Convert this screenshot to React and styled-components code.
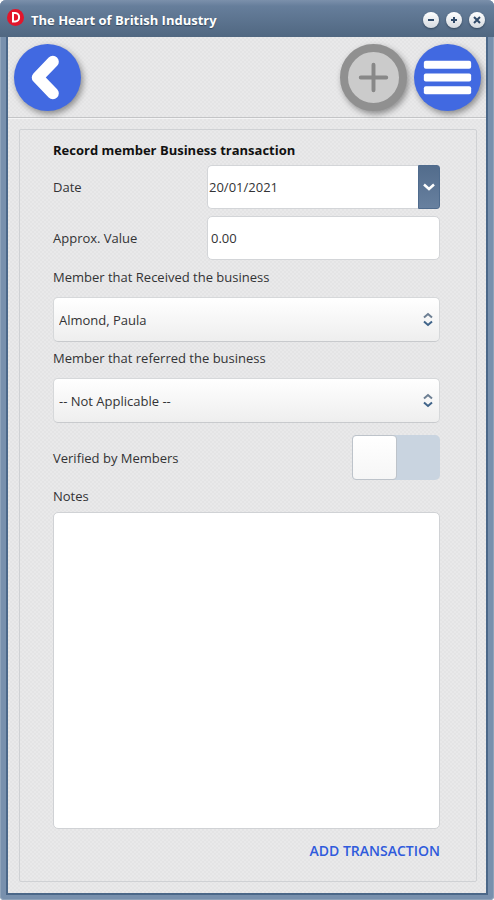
import { useState } from "react";
import styled, { createGlobalStyle } from "styled-components";

const GlobalStyle = createGlobalStyle`
  *, *::before {
    box-sizing: border-box;
  }
  body {
    margin: 0;
    background-color: #fff;
    color: #333335;
    font-family: "Open Sans", "Noto Sans", sans-serif;
    font-size: 13px;
  }
  button, input, select, textarea {
    font: inherit;
    color: inherit;
  }
`;

const Window = styled.div`
  min-height: 100vh;
  display: flex;
  flex-direction: column;
  padding: 0 8px 7px;
  border-radius: 6px 6px 4px 4px;
  background-color: #7890ad;
  box-shadow: inset 0 0 0 1px #8fa3ba;
`;

const TitleBar = styled.header`
  height: 37px;
  margin: 0 -8px;
  padding: 2px 9px 0 7px;
  display: flex;
  align-items: center;
  gap: 7px;
  border-radius: 6px 6px 0 0;
  background: linear-gradient(#7b90ab 0, #667e9b 6px, #506781 100%);
`;

const Logo = styled.svg`
  width: 17px;
  height: 17px;
  flex: none;
  align-self: flex-start;
  margin-top: 7px;
`;

const Title = styled.h1`
  flex: 1;
  margin: 0;
  color: #fff;
  font-size: 13px;
  line-height: 20px;
  font-weight: 700;
  text-shadow: 0 1px 1px #33475d;
`;

const WindowButtons = styled.div`
  display: flex;
  gap: 7px;
`;

const WindowButton = styled.button`
  width: 16px;
  height: 16px;
  padding: 0;
  display: flex;
  align-items: center;
  justify-content: center;
  border: none;
  border-radius: 50%;
  background: linear-gradient(#fff, #d5dae0);
  box-shadow: 0 1px 2px #35485e;
  color: #304a69;

  svg {
    width: 8px;
    height: 8px;
  }
`;

const Body = styled.div`
  flex: 1;
  display: flex;
  flex-direction: column;
  background-color: #e8e8e9;
  background-image: conic-gradient(
    #e4e4e5 25%,
    #e9e9ea 0 50%,
    #e4e4e5 0 75%,
    #e9e9ea 0
  );
  background-size: 4px 4px;
  box-shadow: 0 0 0 2px #4b6788;
  clip-path: inset(0 -2px -2px -2px);
`;

const Toolbar = styled.nav`
  height: 81px;
  padding: 0 5px 0 6px;
  display: flex;
  align-items: center;
  gap: 7px;
  border-bottom: 1px solid #c3c4c6;
  box-shadow: 0 1px 0 #f4f4f5;
`;

const RoundButton = styled.button`
  width: 67px;
  height: 67px;
  padding: 0;
  flex: none;
  border: ${({ $muted }) => ($muted ? "8px solid #909090" : "none")};
  border-radius: 50%;
  background-color: ${({ $muted }) => ($muted ? "#cbcbcb" : "#4169e1")};
  color: ${({ $muted }) => ($muted ? "#888" : "#fff")};
  box-shadow: 2px 3px 6px rgba(0, 0, 0, 0.4);

  svg {
    width: 100%;
    height: 100%;
    display: block;
  }
`;

const Spacer = styled.div`
  flex: 1;
`;

const Panel = styled.form`
  flex: 1;
  margin: 11px 9px 11px 11px;
  padding: 10px 36px 20px 33px;
  display: flex;
  flex-direction: column;
  border: 1px solid #cfd1d4;
  border-radius: 2px;
`;

const Heading = styled.h2`
  margin: 0 0 5px;
  color: #111;
  font-size: 13px;
  line-height: 20px;
  font-weight: 700;
`;

const Row = styled.div`
  min-height: 44px;
  margin-bottom: 7px;
  display: flex;
  align-items: center;
`;

const ToggleRow = styled(Row)`
  justify-content: space-between;
  margin: 6px 0;
`;

const Label = styled.label`
  line-height: 20px;
`;

const RowLabel = styled(Label)`
  width: 154px;
  flex: none;
`;

const DateField = styled.div`
  flex: 1;
  min-width: 0;
  height: 44px;
  display: flex;
`;

const Input = styled.input`
  flex: 1;
  min-width: 0;
  height: 44px;
  padding: 0 3px;
  border: 1px solid #d3d5d8;
  border-radius: 5px;
  background-color: #fff;
  outline: none;
`;

const DateInput = styled(Input)`
  padding: 0 1px;
  border-right: none;
  border-radius: 5px 0 0 5px;
`;

const DateButton = styled.button`
  width: 22px;
  padding: 0;
  display: flex;
  align-items: center;
  justify-content: center;
  border: 1px solid #4f6b8d;
  border-radius: 0 3px 3px 0;
  background: linear-gradient(#526c8c, #67809f);
  color: #fff;

  svg {
    width: 12px;
    height: 8px;
    flex: none;
  }
`;

const SelectBox = styled.div`
  position: relative;
  margin: 10px 0 6px;

  svg {
    position: absolute;
    right: 7px;
    top: 15px;
    width: 10px;
    height: 15px;
    pointer-events: none;
  }
`;

const Select = styled.select`
  width: 100%;
  height: 45px;
  display: block;
  padding: 0 24px 0 5px;
  appearance: none;
  border: 1px solid #d6d8da;
  border-bottom-color: #c8cacd;
  border-radius: 5px;
  background: linear-gradient(#fff, #eee);
  outline: none;
`;

const Toggle = styled.input`
  width: 88px;
  height: 45px;
  margin: 0;
  flex: none;
  display: flex;
  justify-content: ${({ checked }) => (checked ? "flex-end" : "flex-start")};
  appearance: none;
  border-radius: 5px;
  background-color: #c9d4e0;

  &::before {
    content: "";
    width: 45px;
    height: 45px;
    border: 1px solid #bdc3ca;
    border-radius: 4px;
    background: linear-gradient(#fff, #f6f6f6);
  }
`;

const Notes = styled.textarea`
  flex: 1;
  min-height: 120px;
  margin: 6px 0 12px;
  padding: 4px;
  border: 1px solid #d0d2d5;
  border-radius: 5px;
  background-color: #fff;
  resize: none;
  outline: none;
`;

const SubmitButton = styled.button`
  align-self: flex-end;
  padding: 0;
  border: none;
  background: none;
  color: #2f5bdc;
  font-size: 14px;
  line-height: 20px;
  font-weight: 600;
`;

const UpDownIcon = () => (
  <svg viewBox="0 0 10 15" fill="none" strokeWidth="2" aria-hidden="true">
    <path d="M1 5.5 L5 2 L9 5.5" stroke="#6d7f93" />
    <path d="M1 9.5 L5 13 L9 9.5" stroke="#3f6389" />
  </svg>
);

const MemberSelect = ({ id, label, options }) => {
  return (
    <>
      <Label htmlFor={id}>{label}</Label>
      <SelectBox>
        <Select id={id}>
          {options.map((option) => (
            <option key={option}>{option}</option>
          ))}
        </Select>
        <UpDownIcon />
      </SelectBox>
    </>
  );
};

const App = () => {
  const [date, setDate] = useState("20/01/2021");
  const [value, setValue] = useState("0.00");
  const [verified, setVerified] = useState(false);
  const [notes, setNotes] = useState("");

  return (
    <>
      <GlobalStyle />
      <Window>
        <TitleBar>
          <Logo viewBox="0 0 17 17" aria-hidden="true">
            <circle cx="8.5" cy="8.5" r="8.5" fill="#e3162b" />
            <path
              d="M6 4 H8.2 C13.4 4 13.4 12.5 8.2 12.5 H6 Z"
              fill="none"
              stroke="#fff"
              strokeWidth="2"
            />
          </Logo>
          <Title>The Heart of British Industry</Title>
          <WindowButtons>
            <WindowButton aria-label="Minimise">
              <svg viewBox="0 0 8 8" stroke="currentColor" strokeWidth="2">
                <path d="M1 4 H7" />
              </svg>
            </WindowButton>
            <WindowButton aria-label="Maximise">
              <svg viewBox="0 0 8 8" stroke="currentColor" strokeWidth="2">
                <path d="M1 4 H7 M4 1 V7" />
              </svg>
            </WindowButton>
            <WindowButton aria-label="Close">
              <svg viewBox="0 0 8 8" stroke="currentColor" strokeWidth="2">
                <path d="M1 1 L7 7 M7 1 L1 7" />
              </svg>
            </WindowButton>
          </WindowButtons>
        </TitleBar>
        <Body>
          <Toolbar>
            <RoundButton aria-label="Back">
              <svg viewBox="0 0 68 68" fill="none" stroke="currentColor">
                <path
                  d="M39.5 18 L24 34 L39.5 50"
                  strokeWidth="12"
                  strokeLinecap="round"
                  strokeLinejoin="round"
                />
              </svg>
            </RoundButton>
            <Spacer />
            <RoundButton $muted aria-label="Add">
              <svg viewBox="0 0 52 52" fill="none" stroke="currentColor">
                <path
                  d="M13 26 H39 M26 13 V39"
                  strokeWidth="4"
                  strokeLinecap="round"
                />
              </svg>
            </RoundButton>
            <RoundButton aria-label="Menu">
              <svg viewBox="0 0 68 68" fill="currentColor">
                <rect x="10" y="17" width="48" height="8" rx="2" />
                <rect x="10" y="30" width="48" height="8" rx="2" />
                <rect x="10" y="43" width="48" height="8" rx="2" />
              </svg>
            </RoundButton>
          </Toolbar>
          <Panel onSubmit={(e) => e.preventDefault()}>
            <Heading>Record member Business transaction</Heading>
            <Row>
              <RowLabel htmlFor="date">Date</RowLabel>
              <DateField>
                <DateInput
                  id="date"
                  value={date}
                  onChange={(e) => setDate(e.target.value)}
                />
                <DateButton type="button" aria-label="Choose date">
                  <svg viewBox="0 0 12 8" fill="none" stroke="currentColor">
                    <path d="M1 1.5 L6 6 L11 1.5" strokeWidth="2.5" />
                  </svg>
                </DateButton>
              </DateField>
            </Row>
            <Row>
              <RowLabel htmlFor="value">Approx. Value</RowLabel>
              <Input
                id="value"
                value={value}
                onChange={(e) => setValue(e.target.value)}
              />
            </Row>
            <MemberSelect
              id="received"
              label="Member that Received the business"
              options={["Almond, Paula"]}
            />
            <MemberSelect
              id="referred"
              label="Member that referred the business"
              options={["-- Not Applicable --", "Almond, Paula"]}
            />
            <ToggleRow>
              <Label htmlFor="verified">Verified by Members</Label>
              <Toggle
                id="verified"
                type="checkbox"
                role="switch"
                checked={verified}
                onChange={(e) => setVerified(e.target.checked)}
              />
            </ToggleRow>
            <Label htmlFor="notes">Notes</Label>
            <Notes
              id="notes"
              value={notes}
              onChange={(e) => setNotes(e.target.value)}
            />
            <SubmitButton type="submit">ADD TRANSACTION</SubmitButton>
          </Panel>
        </Body>
      </Window>
    </>
  );
};

export default App;
